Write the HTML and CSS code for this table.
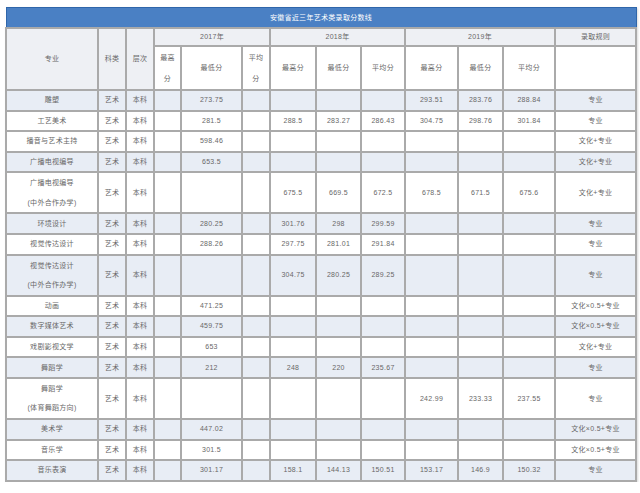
FILE: index.html
```html
<!DOCTYPE html>
<html lang="zh">
<head>
<meta charset="utf-8">
<link rel="stylesheet" href="styles.css">
</head>
<body>
<table class="score">
<colgroup>
<col class="c-major"><col class="c-kind"><col class="c-level">
<col class="c-a"><col class="c-b"><col class="c-c">
<col class="c-d"><col class="c-e"><col class="c-f">
<col class="c-g"><col class="c-h"><col class="c-i">
<col class="c-rule">
</colgroup>
<tr class="title"><td colspan="13">安徽省近三年艺术类录取分数线</td></tr>
<tr class="h1">
<td rowspan="2" class="hd">专业</td><td rowspan="2" class="hd">科类</td><td rowspan="2" class="hd">层次</td>
<td colspan="3" class="hd">2017年</td><td colspan="3" class="hd">2018年</td><td colspan="3" class="hd">2019年</td><td class="hd">录取规则</td>
</tr>
<tr class="h2">
<td class="wrap">最高<br>分</td><td>最低分</td><td class="wrap">平均<br>分</td>
<td>最高分</td><td>最低分</td><td>平均分</td>
<td>最高分</td><td>最低分</td><td>平均分</td><td></td>
</tr>
<tr class="r s"><td>雕塑</td><td>艺术</td><td>本科</td><td></td><td>273.75</td><td></td><td></td><td></td><td></td><td>293.51</td><td>283.76</td><td>288.84</td><td>专业</td></tr>
<tr class="r"><td>工艺美术</td><td>艺术</td><td>本科</td><td></td><td>281.5</td><td></td><td>288.5</td><td>283.27</td><td>286.43</td><td>304.75</td><td>298.76</td><td>301.84</td><td>专业</td></tr>
<tr class="r"><td>播音与艺术主持</td><td>艺术</td><td>本科</td><td></td><td>598.46</td><td></td><td></td><td></td><td></td><td></td><td></td><td></td><td>文化+专业</td></tr>
<tr class="r s"><td>广播电视编导</td><td>艺术</td><td>本科</td><td></td><td>653.5</td><td></td><td></td><td></td><td></td><td></td><td></td><td></td><td>文化+专业</td></tr>
<tr class="r2"><td>广播电视编导<br>(中外合作办学)</td><td>艺术</td><td>本科</td><td></td><td></td><td></td><td>675.5</td><td>669.5</td><td>672.5</td><td>678.5</td><td>671.5</td><td>675.6</td><td>文化+专业</td></tr>
<tr class="r s"><td>环境设计</td><td>艺术</td><td>本科</td><td></td><td>280.25</td><td></td><td>301.76</td><td>298</td><td>299.59</td><td></td><td></td><td></td><td>专业</td></tr>
<tr class="r"><td>视觉传达设计</td><td>艺术</td><td>本科</td><td></td><td>288.26</td><td></td><td>297.75</td><td>281.01</td><td>291.84</td><td></td><td></td><td></td><td>专业</td></tr>
<tr class="r2 s"><td>视觉传达设计<br>(中外合作办学)</td><td>艺术</td><td>本科</td><td></td><td></td><td></td><td>304.75</td><td>280.25</td><td>289.25</td><td></td><td></td><td></td><td>专业</td></tr>
<tr class="r"><td>动画</td><td>艺术</td><td>本科</td><td></td><td>471.25</td><td></td><td></td><td></td><td></td><td></td><td></td><td></td><td>文化×0.5+专业</td></tr>
<tr class="r s"><td>数字媒体艺术</td><td>艺术</td><td>本科</td><td></td><td>459.75</td><td></td><td></td><td></td><td></td><td></td><td></td><td></td><td>文化×0.5+专业</td></tr>
<tr class="r"><td>戏剧影视文学</td><td>艺术</td><td>本科</td><td></td><td>653</td><td></td><td></td><td></td><td></td><td></td><td></td><td></td><td>文化+专业</td></tr>
<tr class="r s"><td>舞蹈学</td><td>艺术</td><td>本科</td><td></td><td>212</td><td></td><td>248</td><td>220</td><td>235.67</td><td></td><td></td><td></td><td>专业</td></tr>
<tr class="r2"><td>舞蹈学<br>(体育舞蹈方向)</td><td>艺术</td><td>本科</td><td></td><td></td><td></td><td></td><td></td><td></td><td>242.99</td><td>233.33</td><td>237.55</td><td>专业</td></tr>
<tr class="r s"><td>美术学</td><td>艺术</td><td>本科</td><td></td><td>447.02</td><td></td><td></td><td></td><td></td><td></td><td></td><td></td><td>文化×0.5+专业</td></tr>
<tr class="r"><td>音乐学</td><td>艺术</td><td>本科</td><td></td><td>301.5</td><td></td><td></td><td></td><td></td><td></td><td></td><td></td><td>文化×0.5+专业</td></tr>
<tr class="r s"><td>音乐表演</td><td>艺术</td><td>本科</td><td></td><td>301.17</td><td></td><td>158.1</td><td>144.13</td><td>150.51</td><td>153.17</td><td>146.9</td><td>150.32</td><td>专业</td></tr>
</table>
</body>
</html>
```
FILE: styles.css
```css
html, body {
  margin: 0;
  padding: 0;
  background: #ffffff;
}
body {
  padding: 7px 0 0 5px;
  font-family: "Liberation Sans", "Noto Sans CJK SC", sans-serif;
  font-size: 7px;
  color: #686868;
}
.score {
  border-collapse: collapse;
  table-layout: fixed;
  width: 630px;
  box-shadow: 1px 1px 2px rgba(0,0,0,0.15);
}
.c-major { width: 92px; }
.c-kind { width: 28px; }
.c-level { width: 28px; }
.c-a { width: 27px; }
.c-b { width: 61px; }
.c-c { width: 28px; }
.c-d { width: 46px; }
.c-e { width: 45px; }
.c-f { width: 44px; }
.c-g { width: 53px; }
.c-h { width: 45px; }
.c-i { width: 52px; }
.c-rule { width: 81px; }
.score td {
  border: 2px solid #aaaaaa;
  padding: 0;
  text-align: center;
  vertical-align: middle;
  line-height: 12px;
  white-space: nowrap;
  letter-spacing: 0.3px;
}
.title td {
  height: 19px;
  background: #4a80c4;
  border: 1px solid #2f66aa;
  color: #ffffff;
  line-height: 12px;
}
.h1 td {
  height: 16px;
  background: #eef0f4;
}
.h2 td {
  height: 37px;
  background: #ffffff;
}
.h2 td.wrap { line-height: 21px; }
.r td { height: 18.6px; }
.r2 td { height: 39px; line-height: 19.5px; }
.s td { background: #e8edf5; }
```
